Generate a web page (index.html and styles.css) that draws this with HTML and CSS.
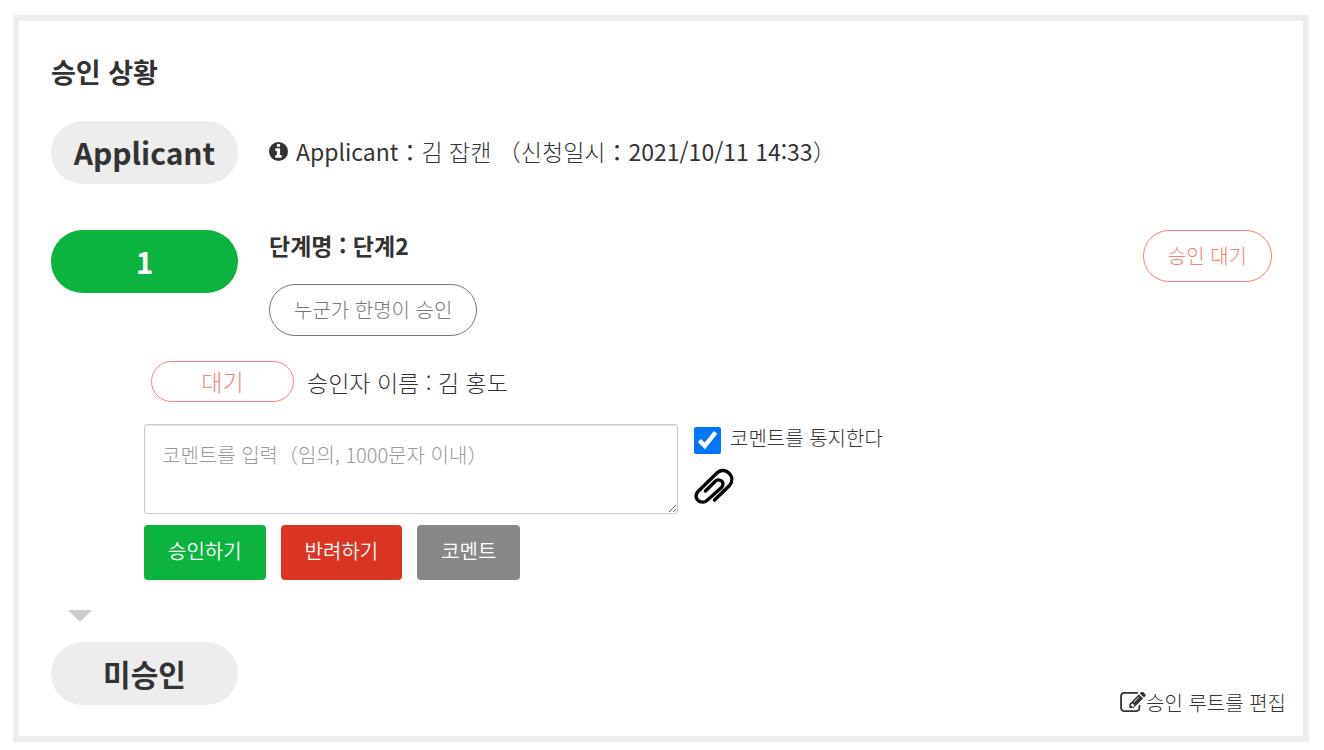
FILE: index.html
```html
<!DOCTYPE html>
<html lang="ko">
<head>
<meta charset="utf-8">
<meta name="viewport" content="width=device-width, initial-scale=1">
<title>승인 상황</title>
<link rel="stylesheet" href="styles.css">
</head>
<body>
<main class="panel">
  <h1 class="title">승인 상황</h1>

  <section class="row row-applicant">
    <div class="pill">Applicant</div>
    <p class="applicant-info">
      <svg class="icon-info" viewBox="0 0 1536 1536" aria-hidden="true"><path fill="currentColor" fill-rule="evenodd" d="M1536 768a768 768 0 1 1-1536 0a768 768 0 1 1 1536 0zM1024 1248v-160q0-14-9-23t-23-9h-96v-512q0-14-9-23t-23-9h-320q-14 0-23 9t-9 23v160q0 14 9 23t23 9h96v320h-96q-14 0-23 9t-9 23v160q0 14 9 23t23 9h448q14 0 23-9t9-23zM896 352v-160q0-14-9-23t-23-9h-192q-14 0-23 9t-9 23v160q0 14 9 23t23 9h192q14 0 23-9t9-23z"/></svg>
      <span><span class="latin">Applicant：</span>김 잡캔 （신청일시<span class="latin">：2021/10/11 14:33</span>）</span>
    </p>
  </section>

  <section class="row">
    <div class="pill pill-active">1</div>
    <div class="step">
      <h2 class="step-name">단계명 : 단계2</h2>
      <span class="tag">누군가 한명이 승인</span>
    </div>
    <span class="tag tag-waiting">승인 대기</span>
  </section>

  <section class="approval">
    <div class="approver">
      <span class="approver-state">대기</span>
      <span>승인자 이름 : 김 홍도</span>
    </div>
    <form class="comment">
      <textarea class="comment-text" aria-label="코멘트" placeholder="코멘트를 입력（임의, 1000문자 이내）"></textarea>
      <div class="comment-options">
        <label class="notify"><input class="notify-box" type="checkbox" checked>코멘트를 통지한다</label>
        <button class="attach" type="button" aria-label="파일 첨부">
          <svg class="icon-clip" viewBox="0 0 40 37" aria-hidden="true"><path fill="none" stroke="currentColor" stroke-width="3.4" stroke-linecap="round" stroke-linejoin="round" d="M11.500 23L21 13.500C25.500 9 32 14.500 27.500 19.500L13.500 32C7 38-2 30 4 23.500L23.500 4.500C31-2 43 8.500 35.500 17.500L20.500 32"/></svg>
        </button>
      </div>
    </form>
    <div class="actions">
      <button class="btn btn-approve" type="button">승인하기</button>
      <button class="btn btn-reject" type="button">반려하기</button>
      <button class="btn btn-comment" type="button">코멘트</button>
    </div>
  </section>

  <div class="arrow"></div>

  <footer class="final">
    <div class="pill">미승인</div>
    <a class="edit" href="#">
      <svg class="icon-edit" viewBox="0 0 1792 1536" aria-hidden="true"><path fill="currentColor" fill-rule="evenodd" d="M888 1056l116-116-152-152-116 116v56h96v96h56zM1328 336q-16-16-33 1l-350 350q-17 17-1 33t33-1l350-350q17-17 1-33zM1408 922v190q0 119-84.500 203.500t-203.500 84.500h-832q-119 0-203.500-84.500t-84.500-203.500v-832q0-119 84.500-203.500t203.500-84.500h832q63 0 117 25 15 7 18 23 3 17-9 29l-49 49q-14 14-32 8-23-6-45-6h-832q-66 0-113 47t-47 113v832q0 66 47 113t113 47h832q66 0 113-47t47-113v-126q0-13 9-22l64-64q15-15 35-7t20 29zM1312 160l288 288-672 672h-288v-288zM1756 292l-92 92-288-288 92-92q28-28 68-28t68 28l152 152q28 28 28 68t-28 68z"/></svg><span>승인 루트를 편집</span>
    </a>
  </footer>
</main>
</body>
</html>
```
FILE: styles.css
```css
* {
  box-sizing: border-box;
}

body {
  margin: 15px 15px 8px 13px;
  background: #fff;
  color: #333;
  font-family: "Noto Sans CJK KR", "Noto Sans CJK JP", sans-serif;
  font-size: 23px;
  font-weight: 300;
  line-height: 32px;
}

h1, h2, p {
  margin: 0;
}

button, textarea, input {
  font: inherit;
}

.latin {
  font-weight: 400;
}

.panel {
  padding: 31px 17px 31px 32px;
  border: 6px solid #ededed;
}

.title {
  margin-bottom: 29px;
  font-size: 27px;
  line-height: 40px;
  font-weight: 700;
}

.row {
  display: flex;
  align-items: flex-start;
  gap: 31px;
  padding-right: 14px;
}

.row-applicant {
  align-items: center;
  margin-bottom: 46px;
}

.pill {
  flex: none;
  width: 187px;
  border-radius: 32px;
  background: #ededed;
  font-size: 30px;
  line-height: 63px;
  font-weight: 700;
  text-align: center;
}

.pill-active {
  background: #0db33f;
  color: #fff;
}

.applicant-info {
  display: flex;
  align-items: baseline;
  gap: 8px;
  padding-bottom: 3px;
}

.icon-info {
  flex: none;
  width: 19px;
  height: 19px;
}

.step {
  flex: 1;
}

.step-name {
  margin-bottom: 24px;
  font-size: 23px;
  line-height: 30px;
  font-weight: 700;
}

.tag {
  display: inline-block;
  padding: 0 24px;
  border: 1px solid #777;
  border-radius: 26px;
  color: #777;
  font-size: 20px;
  line-height: 50px;
}

.tag-waiting {
  border-color: #fa8072;
  color: #fa8072;
}

.approval {
  padding: 25px 0 30px 93px;
}

.approver {
  display: flex;
  align-items: center;
  gap: 13px;
  margin: 0 0 22px 7px;
}

.approver-state {
  width: 143px;
  border: 1px solid #fa8080;
  border-radius: 21px;
  color: #fa8080;
  line-height: 39px;
  text-align: center;
}

.comment {
  display: flex;
  gap: 16px;
  margin-bottom: 11px;
}

.comment-text {
  flex: 0 1 534px;
  min-width: 0;
  height: 90px;
  padding: 14px 17px;
  border: 1px solid #ccc;
  border-radius: 3px;
  box-shadow: inset 0 1px 2px rgba(0, 0, 0, 0.1);
  font-size: 20px;
  resize: both;
}

.comment-text::placeholder {
  color: #999;
}

.notify {
  display: flex;
  align-items: flex-start;
  gap: 9px;
  font-size: 20px;
  line-height: 28px;
}

.notify-box {
  width: 27px;
  height: 27px;
  margin: 3px 0 0;
}

.attach {
  display: block;
  margin-top: 14px;
  padding: 0;
  border: 0;
  background: none;
  color: #000;
}

.icon-clip {
  display: block;
  width: 40px;
  height: 37px;
}

.actions {
  display: flex;
  gap: 15px;
}

.btn {
  padding: 10px 24px 13px;
  border: 0;
  border-radius: 4px;
  color: #fff;
  font-size: 20px;
  font-weight: 350;
  line-height: 32px;
}

.btn-approve {
  background: #0db33f;
}

.btn-reject {
  background: #da3422;
}

.btn-comment {
  background: #888;
}

.arrow {
  width: 0;
  margin: 0 0 20px 17px;
  border: 12px solid transparent;
  border-top-color: #ccc;
  border-bottom: 0;
}

.final {
  display: flex;
  align-items: flex-end;
  justify-content: space-between;
}

.edit {
  display: flex;
  align-items: center;
  margin-bottom: -14px;
  color: #333;
  font-size: 20px;
  text-decoration: none;
}

.icon-edit {
  width: 26px;
  height: 22px;
}
```
